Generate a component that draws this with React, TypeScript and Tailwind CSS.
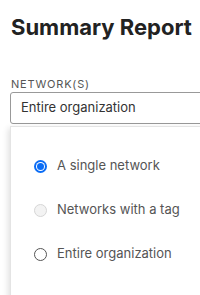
import React from "react";

function Radio({ state }: { state: "checked" | "disabled" | "off" }) {
  if (state === "checked")
    return (
      <span className="w-[13px] h-[13px] rounded-full bg-[#0a6cf5] flex items-center justify-center shrink-0">
        <span className="w-[9px] h-[9px] rounded-full bg-white flex items-center justify-center">
          <span className="w-[7px] h-[7px] rounded-full bg-[#0a6cf5]" />
        </span>
      </span>
    );
  if (state === "disabled")
    return <span className="w-[13px] h-[13px] rounded-full border border-[#d6d6d6] bg-[#f3f3f3] shrink-0" />;
  return <span className="w-[13px] h-[13px] rounded-full border border-[#555] bg-white shrink-0" />;
}

export default function App() {
  const opts: { label: string; state: "checked" | "disabled" | "off" }[] = [
    { label: "A single network", state: "checked" },
    { label: "Networks with a tag", state: "disabled" },
    { label: "Entire organization", state: "off" },
  ];
  return (
    <div className="w-[200px] h-[295px] overflow-hidden bg-white font-['Inter',sans-serif]">
      <h1 className="pl-[11px] pt-[14px] text-[22px] leading-[26px] font-bold text-[#222]">Summary Report</h1>
      <div className="pl-[10px] pt-[38px]">
        <div className="pl-px text-[11px] leading-[13px] tracking-[0.8px] text-[#555]">NETWORK(S)</div>
        <div className="mt-[1px] w-[210px] h-[32px] border border-[#999] rounded-[3px] flex items-center pl-[10px] text-[13px] text-[#333]">
          Entire organization
        </div>
        <div className="mt-[2px] w-[210px] h-[200px] bg-white border border-[#e4e4e4] shadow-[-2px_2px_6px_rgba(0,0,0,0.12)] pt-[32px] pl-[23px] flex flex-col gap-[30px]">
          {opts.map((o) => (
            <div key={o.label} className="flex items-center gap-[10px] h-[14px]">
              <Radio state={o.state} />
              <span className="text-[13px] text-[#555]">{o.label}</span>
            </div>
          ))}
        </div>
      </div>
    </div>
  );
}
